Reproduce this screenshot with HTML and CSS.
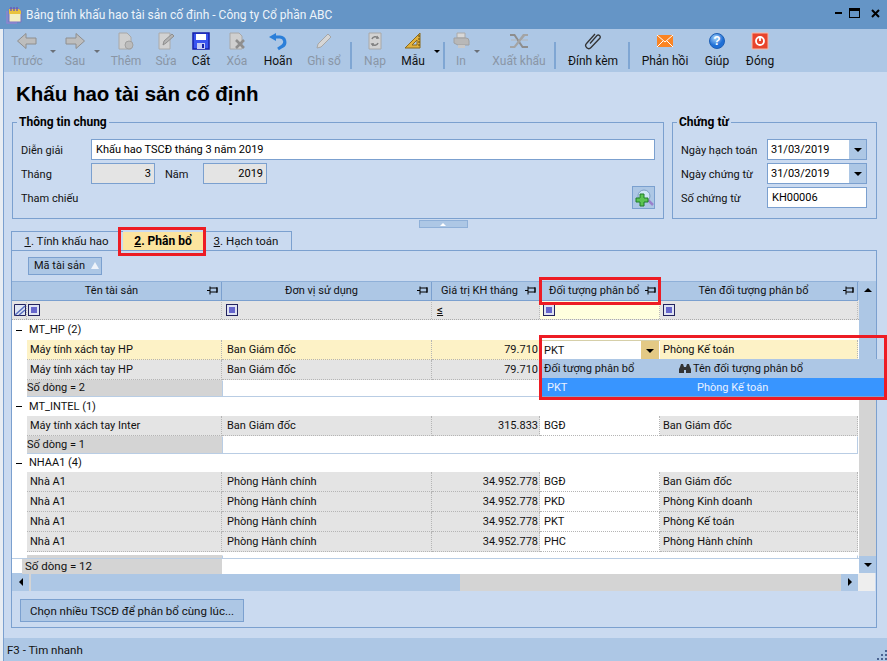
FILE: index.html
```html
<!DOCTYPE html>
<html lang="vi">
<head>
    <meta charset="UTF-8">
    <meta name="viewport" content="width=device-width, initial-scale=1.0">
    <title>Bảng tính khấu hao tài sản cố định</title>
    <link rel="stylesheet" href="styles.css">
</head>
<body>

    <!-- Title bar -->
    <div class="titlebar">
        <svg class="app-icon" width="18" height="18" viewBox="0 0 18 18"><path d="M3 3h10l2 2v11H3z" fill="#f3efc0" stroke="#7d6fc0"/><path d="M3 3h10l2 2v3H3z" fill="#e9c33d"/><path d="M5 1v4M8 1v4M11 1v4" stroke="#6a5bb5" stroke-width="1.4"/><path d="M1 5v12h10" fill="none" stroke="#8f83d0" stroke-width="1.4"/></svg>
        <span class="title-text">Bảng tính khấu hao tài sản cố định - Công ty Cổ phần ABC</span>
        <div class="win-btns">
            <span class="win-min"></span>
            <span class="win-max"></span>
            <svg width="9" height="9" viewBox="0 0 9 9"><path d="M1 1l7 7M8 1l-7 7" stroke="#000" stroke-width="2"/></svg>
        </div>
    </div>

    <div class="window">

        <!-- Toolbar -->
        <div class="toolbar">
            <div class="tool off">
                <svg width="22" height="18" viewBox="0 0 22 18"><path d="M1.5 9L10 1.5V6h10v6H10v4.500z" fill="#bdbdbd" stroke="#8e8e8e"/></svg>
                <span>Trước</span>
            </div>
            <i class="caret"></i>
            <div class="tool off">
                <svg width="22" height="18" viewBox="0 0 22 18"><path d="M20.500 9L12 1.500V6H2v6h10v4.500z" fill="#bdbdbd" stroke="#8e8e8e"/></svg>
                <span>Sau</span>
            </div>
            <i class="caret"></i>
            <div class="tool off">
                <svg width="18" height="18" viewBox="0 0 18 18"><path d="M2 1h8l4 4v12H2z" fill="#cfcfcf" stroke="#a8a8a8"/><circle cx="12" cy="13" r="4" fill="#bcbcbc" stroke="#a0a0a0"/></svg>
                <span>Thêm</span>
            </div>
            <div class="tool off">
                <svg width="18" height="18" viewBox="0 0 18 18"><path d="M2 1h11v16H2z" fill="#d2d2d2" stroke="#aaa"/><path d="M6 13l1-4 8-7 2 2-8 7z" fill="#b4b4b4" stroke="#8e8e8e"/></svg>
                <span>Sửa</span>
            </div>
            <div class="tool">
                <svg width="18" height="18" viewBox="0 0 18 18"><path d="M1 1h16v16H1z" fill="#3a55f0" stroke="#1420a8" stroke-width="1.500"/><path d="M4 2h10v6H4z" fill="#fff"/><path d="M5 11h8v6H5z" fill="#c5cdf5"/><path d="M10 12h2v4h-2z" fill="#1420a8"/></svg>
                <span>Cất</span>
            </div>
            <div class="tool off">
                <svg width="18" height="18" viewBox="0 0 18 18"><path d="M2 1h9l3 3v13H2z" fill="#cfcfcf" stroke="#a8a8a8"/><path d="M8 8l8 8M16 8l-8 8" stroke="#8e8e8e" stroke-width="2.500"/></svg>
                <span>Xóa</span>
            </div>
            <div class="tool">
                <svg width="20" height="18" viewBox="0 0 20 18"><path d="M7 5h5a5 5 0 0 1 2 9.500L10 17" fill="none" stroke="#2b7fd9" stroke-width="3.200"/><path d="M1 5l7-4v8z" fill="#2b7fd9"/></svg>
                <span>Hoãn</span>
            </div>
            <div class="tool off">
                <svg width="18" height="18" viewBox="0 0 18 18"><path d="M2 16l1-4L13 2l3 3L6 15z" fill="#d6d6d6" stroke="#a6a6a6"/></svg>
                <span>Ghi sổ</span>
            </div>
            <b class="sep"></b>
            <div class="tool off">
                <svg width="18" height="18" viewBox="0 0 18 18"><path d="M3 1h12v16H3z" fill="#d2d2d2" stroke="#a8a8a8"/><path d="M6 7a3.500 3.500 0 0 1 6-1M12 11a3.500 3.500 0 0 1-6 1" fill="none" stroke="#808080" stroke-width="1.600"/><path d="M11 3.500l2.500 3-3.500.500zM7 14.500l-2.500-3 3.500-.500z" fill="#808080"/></svg>
                <span>Nạp</span>
            </div>
            <div class="tool">
                <svg width="20" height="18" viewBox="0 0 20 18"><path d="M17 1v15H2z" fill="#e3b23c" stroke="#8a6a1c"/><path d="M14 8v5H9z" fill="#aec8e6" stroke="#8a6a1c"/><path d="M15 4h2M15 7h2M15 10h2M15 13h2" stroke="#5a4410"/></svg>
                <span>Mẫu</span>
            </div>
            <i class="caret dark"></i>
            <b class="sep"></b>
            <div class="tool off">
                <svg width="18" height="18" viewBox="0 0 18 18"><path d="M5 1h8v5H5z" fill="#d8d8d8" stroke="#aaa"/><path d="M2 6h12a3 3 0 0 1 3 3v4H6l-4-2z" fill="#b8b8b8" stroke="#a0a0a0"/><path d="M6 13h7v3H6z" fill="#c8c8c8"/></svg>
                <span>In</span>
            </div>
            <i class="caret"></i>
            <div class="tool off">
                <svg width="20" height="18" viewBox="0 0 20 18"><path d="M1 2h5l8 12h5v2h-6L5 4H1z" fill="#8d8d8d"/><path d="M14 2h5v2h-3L6 16H1v-2h4z" fill="#a4a4a4"/><path d="M8 8h-6M13 8h6" stroke="#b5b5b5"/></svg>
                <span>Xuất khẩu</span>
            </div>
            <b class="sep"></b>
            <div class="tool">
                <svg width="18" height="18" viewBox="0 0 18 18"><path d="M6 12l7-8a2 2 0 0 1 3 2.500l-9 9.500a3 3 0 0 1-4.500-4L11 2.500" fill="none" stroke="#333" stroke-width="1.300" transform="translate(0 -.5)"/></svg>
                <span>Đính kèm</span>
            </div>
            <b class="sep"></b>
            <div class="tool">
                <svg width="18" height="18" viewBox="0 0 18 18"><path d="M1 3h16v12H1z" fill="#fb8422"/><path d="M1 3l8 7 8-7M1 15l6-6M17 15l-6-6" fill="none" stroke="#fff"/></svg>
                <span>Phản hồi</span>
            </div>
            <div class="tool">
                <svg width="18" height="18" viewBox="0 0 18 18"><defs><radialGradient id="helpBlue" cx=".4" cy=".3"><stop offset="0" stop-color="#a8d4fb"/><stop offset="1" stop-color="#1f6fd6"/></radialGradient></defs><circle cx="9" cy="9" r="7.500" fill="url(#helpBlue)" stroke="#1d5fb5"/><text x="9" y="13" text-anchor="middle" class="help-mark">?</text></svg>
                <span>Giúp</span>
            </div>
            <div class="tool">
                <svg width="18" height="18" viewBox="0 0 18 18"><path d="M1 1h16v16H1z" fill="#e8442c" stroke="#f7b8a8"/><circle cx="9" cy="9" r="4" fill="none" stroke="#fff" stroke-width="1.800"/><path d="M9 4v5" stroke="#fff" stroke-width="1.800"/></svg>
                <span>Đóng</span>
            </div>
        </div>

        <h1>Khấu hao tài sản cố định</h1>

        <!-- Header groups -->
        <div class="info-row">
            <fieldset class="group general">
                <legend>Thông tin chung</legend>
                <div class="general-form">
                    <label>Diễn giải</label>
                    <div class="input wide">Khấu hao TSCĐ tháng 3 năm 2019</div>
                    <label>Tháng</label>
                    <div class="period">
                        <div class="input locked">3</div>
                        <label>Năm</label>
                        <div class="input locked">2019</div>
                    </div>
                    <label>Tham chiếu</label>
                    <div class="ref-line">
                        <span class="add-btn">
                            <svg width="20" height="20" viewBox="0 0 20 20"><circle cx="10" cy="8" r="6" fill="#cfe6f7" stroke="#7d9fc4"/><path d="M14 12l5 5" stroke="#9a82cc" stroke-width="2.500"/><path d="M6 6h4v4h4v4h-4v4H6v-4H2v-4h4z" fill="#5cc552" stroke="#1e7d2a"/></svg>
                        </span>
                    </div>
                </div>
            </fieldset>
            <fieldset class="group voucher">
                <legend>Chứng từ</legend>
                <div class="voucher-form">
                    <label>Ngày hạch toán</label>
                    <div class="input date">31/03/2019<span class="drop"><i class="caret black"></i></span></div>
                    <label>Ngày chứng từ</label>
                    <div class="input date">31/03/2019<span class="drop"><i class="caret black"></i></span></div>
                    <label>Số chứng từ</label>
                    <div class="input">KH00006</div>
                </div>
            </fieldset>
        </div>

        <div class="collapse-bar"><span><i class="caret-up"></i></span></div>

        <!-- Tabs -->
        <div class="tabs">
            <div class="tab first"><u>1</u>. Tính khấu hao</div>
            <div class="tab active"><u>2</u>. Phân bổ</div>
            <div class="tab last"><u>3</u>. Hạch toán</div>
        </div>

        <div class="panel">
            <div class="groupbar">
                <div class="groupbox">Mã tài sản <i class="sort-up"></i></div>
            </div>

            <div class="grid-wrap">
                <div class="grid">
                    <div class="row head">
                        <div class="hcell span2">Tên tài sản<svg class="pin" width="11" height="9" viewBox="0 0 11 9"><path d="M0 4.500h3M3 .5v8M3 2h7v4H3M10 1v6" fill="none" stroke="#000"/></svg></div>
                        <div class="hcell">Đơn vị sử dụng<svg class="pin" width="11" height="9" viewBox="0 0 11 9"><path d="M0 4.500h3M3 .5v8M3 2h7v4H3M10 1v6" fill="none" stroke="#000"/></svg></div>
                        <div class="hcell left">Giá trị KH tháng<svg class="pin" width="11" height="9" viewBox="0 0 11 9"><path d="M0 4.500h3M3 .5v8M3 2h7v4H3M10 1v6" fill="none" stroke="#000"/></svg></div>
                        <div class="hcell left">Đối tượng phân bổ<svg class="pin" width="11" height="9" viewBox="0 0 11 9"><path d="M0 4.500h3M3 .5v8M3 2h7v4H3M10 1v6" fill="none" stroke="#000"/></svg></div>
                        <div class="hcell">Tên đối tượng phân bổ<svg class="pin" width="11" height="9" viewBox="0 0 11 9"><path d="M0 4.500h3M3 .5v8M3 2h7v4H3M10 1v6" fill="none" stroke="#000"/></svg></div>
                    </div>

                    <div class="row filter">
                        <div class="fcell"><svg width="12" height="12" viewBox="0 0 12 12"><path d="M.5.5h11v11H.5z" fill="#dfe6f2" stroke="#23235e"/><path d="M1 11L11 2M5 11l6-5" stroke="#5a6fc0" stroke-width="1.500"/></svg></div>
                        <div class="fcell"><i class="fbox"></i></div>
                        <div class="fcell"><i class="fbox"></i></div>
                        <div class="fcell"><u class="op">≤</u></div>
                        <div class="fcell pale"><i class="fbox"></i></div>
                        <div class="fcell"><i class="fbox"></i></div>
                    </div>

                    <div class="grid-body">
                        <div class="grp"><span class="minus"></span>MT_HP (2)</div>
                        <div class="row data current">
                            <div></div>
                            <div class="c">Máy tính xách tay HP</div>
                            <div class="c">Ban Giám đốc</div>
                            <div class="c num">79.710</div>
                            <div class="c editor"><span class="edit-text">PKT</span><span class="edit-drop"><i class="caret black"></i></span></div>
                            <div class="c">Phòng Kế toán</div>
                        </div>
                        <div class="row data">
                            <div></div>
                            <div class="c">Máy tính xách tay HP</div>
                            <div class="c">Ban Giám đốc</div>
                            <div class="c num">79.710</div>
                            <div class="c open"></div>
                            <div class="c"></div>
                        </div>
                        <div class="sum h17"><div>Số dòng = 2</div><div></div></div>

                        <div class="grp h19"><span class="minus"></span>MT_INTEL (1)</div>
                        <div class="row data">
                            <div></div>
                            <div class="c">Máy tính xách tay Inter</div>
                            <div class="c">Ban Giám đốc</div>
                            <div class="c num">315.833</div>
                            <div class="c open">BGĐ</div>
                            <div class="c">Ban Giám đốc</div>
                        </div>
                        <div class="sum"><div>Số dòng = 1</div><div></div></div>

                        <div class="grp h18"><span class="minus"></span>NHAA1 (4)</div>
                        <div class="row data">
                            <div></div>
                            <div class="c">Nhà A1</div>
                            <div class="c">Phòng Hành chính</div>
                            <div class="c num">34.952.778</div>
                            <div class="c open">BGĐ</div>
                            <div class="c">Ban Giám đốc</div>
                        </div>
                        <div class="row data">
                            <div></div>
                            <div class="c">Nhà A1</div>
                            <div class="c">Phòng Hành chính</div>
                            <div class="c num">34.952.778</div>
                            <div class="c open">PKD</div>
                            <div class="c">Phòng Kinh doanh</div>
                        </div>
                        <div class="row data">
                            <div></div>
                            <div class="c">Nhà A1</div>
                            <div class="c">Phòng Hành chính</div>
                            <div class="c num">34.952.778</div>
                            <div class="c open">PKT</div>
                            <div class="c">Phòng Kế toán</div>
                        </div>
                        <div class="row data">
                            <div></div>
                            <div class="c">Nhà A1</div>
                            <div class="c">Phòng Hành chính</div>
                            <div class="c num">34.952.778</div>
                            <div class="c open">PHC</div>
                            <div class="c">Phòng Hành chính</div>
                        </div>
                        <div class="sum last"><div>Số dòng = 4</div><div></div></div>
                    </div>

                    <div class="grand-total">
                        <div class="gap"></div>
                        <div class="label">Số dòng = 12</div>
                        <div class="rest"></div>
                    </div>

                    <!-- Open dropdown of the current row -->
                    <div class="dropdown">
                        <div class="dd-head"><span class="dd-a">Đối tượng phân bổ</span><svg class="binoculars" width="12" height="11" viewBox="0 0 12 11"><path d="M1 4l1-3h2l1 3v6H0V6zM11 4l-1-3H8L7 4v6h5V6zM5 4h2v3H5z" fill="#333"/></svg><span>Tên đối tượng phân bổ</span></div>
                        <div class="dd-row"><span class="dd-b">PKT</span><span>Phòng Kế toán</span></div>
                    </div>
                </div>

                <div class="vscroll">
                    <div class="sb-btn v top"><i class="caret-up dark"></i></div>
                    <div class="v-thumb"></div>
                    <div class="v-track"></div>
                    <div class="sb-btn v"><i class="caret black"></i></div>
                </div>
            </div>

            <div class="hscroll">
                <div class="sb-btn h"><i class="caret-left"></i></div>
                <div class="h-thumb"></div>
                <div class="h-track"></div>
                <div class="sb-btn h"><i class="caret-right"></i></div>
                <div class="corner"></div>
            </div>

            <div class="panel-foot">
                <button>Chọn nhiều TSCĐ để phân bổ cùng lúc...</button>
            </div>
        </div>

        <div class="statusbar">
            <span>F3 - Tìm nhanh</span>
            <svg width="11" height="11" viewBox="0 0 11 11"><path d="M9 1h2v2H9zM5 5h2v2H5zM9 5h2v2H9zM1 9h2v2H1zM5 9h2v2H5zM9 9h2v2H9z" fill="#4a6290"/></svg>
        </div>
    </div>

    <!-- Red marks drawn on the screenshot -->
    <div class="mark mark-tab"></div>
    <div class="mark mark-head"></div>
    <div class="mark mark-row"></div>

</body>
</html>
```

FILE: styles.css
```css
html, body {
    margin: 0;
    height: 100%;
    overflow: hidden;
}

body {
    font-family: Roboto, "Liberation Sans", Arial, sans-serif;
    font-size: 11px;
    color: #111;
    background-color: #e8edf3;
    position: relative;
}

.titlebar {
    height: 29px;
    background-color: #6595c6;
    display: flex;
    align-items: center;
    padding-left: 6px;
}

.app-icon {
    margin-right: 2px;
}

.title-text {
    color: #eef4fa;
    font-size: 12px;
}

.win-btns {
    margin-left: auto;
    margin-right: 7px;
    margin-bottom: 3px;
    display: flex;
    align-items: center;
    gap: 7px;
}

.win-btns svg {
    margin-left: 4px;
}

.win-min {
    width: 7px;
    height: 2px;
    background-color: #000;
}

.win-max {
    width: 9px;
    height: 6px;
    border: 1px solid #000;
    border-top-width: 3px;
}

.window {
    margin-left: 3px;
    height: 632px;
    background-color: #cadaf0;
    border-left: 1px solid #7ba0cf;
    display: flex;
    flex-direction: column;
}

/* toolbar */
.toolbar {
    height: 43px;
    flex: none;
    background-color: #adc7e5;
    display: grid;
    grid-template-columns: 46px 6px 38px 6px 52px 28px 42px 30px 52px 40px 14px 34px 42px 6px 8px 26px 14px 62px 10px 66px 6px 66px 38px 48px;
    align-items: stretch;
    font-size: 12px;
}

.tool {
    display: flex;
    flex-direction: column;
    align-items: center;
    justify-content: space-between;
    padding: 2px 0 4px;
    white-space: nowrap;
    color: #111;
}

.tool svg {
    height: 20px;
}

.tool.off {
    color: #8a96a6;
}

.help-mark {
    font-family: "Liberation Sans", sans-serif;
    font-size: 12px;
    font-weight: bold;
    fill: #fff;
}

.caret {
    display: block;
    width: 0;
    height: 0;
    border-left: 3px solid transparent;
    border-right: 3px solid transparent;
    border-top: 3px solid #6a7078;
    align-self: start;
    margin-top: 21px;
}

.caret.dark {
    border-top-color: #000;
}

.caret.black {
    border-left-width: 4px;
    border-right-width: 4px;
    border-top: 4px solid #000;
    margin: 0;
    align-self: auto;
}

.sep {
    display: block;
    width: 2px;
    justify-self: center;
    margin: 13px 0 3px;
    background-color: #7fa6d3;
}

h1 {
    margin: 0;
    padding: 10px 0 0 12px;
    height: 33px;
    box-sizing: border-box;
    font-family: "Liberation Sans", Arial, sans-serif;
    font-size: 20.5px;
    line-height: 24px;
    font-weight: bold;
    color: #000;
    flex: none;
}

/* groups */
.info-row {
    display: flex;
    gap: 8px;
    padding: 10px 10px 0 8px;
    flex: none;
}

.group {
    margin: 0;
    padding: 10px 8px 10px;
    border: 1px solid #7ba0cf;
    box-sizing: border-box;
    min-width: 0;
}

.group legend {
    font-size: 12px;
    font-weight: bold;
    color: #000;
    padding: 0 2px;
    margin-left: -4px;
    line-height: 14px;
}

.group label {
    padding-top: 1px;
}

.general {
    flex: 1;
}

.voucher {
    width: 205px;
    flex: none;
}

.general-form {
    display: grid;
    grid-template-columns: 70px 1fr;
    grid-auto-rows: 21px;
    row-gap: 3px;
    align-items: center;
}

.voucher-form {
    display: grid;
    grid-template-columns: 86px 100px;
    grid-auto-rows: 21px;
    row-gap: 3px;
    align-items: center;
}

.input {
    height: 21px;
    box-sizing: border-box;
    background-color: #fff;
    border: 1px solid #7ba0cf;
    padding: 0 4px;
    line-height: 20px;
    color: #000;
}

.input.locked {
    width: 64px;
    background-color: #e4e4e4;
    text-align: right;
    padding-right: 3px;
}

.input.date {
    display: flex;
    justify-content: space-between;
    padding: 0 0 0 3px;
}

.drop {
    width: 17px;
    background-color: #adc7e5;
    display: flex;
    align-items: center;
    justify-content: center;
}

.period {
    display: flex;
    align-items: center;
}

.period label {
    width: 48px;
    padding-left: 10px;
    box-sizing: border-box;
}

.ref-line {
    display: flex;
    justify-content: flex-end;
}

.add-btn {
    width: 23px;
    height: 23px;
    box-sizing: border-box;
    background-color: #adc7e5;
    border: 1px solid #7ba0cf;
    display: flex;
    align-items: center;
    justify-content: center;
}

.collapse-bar {
    height: 8px;
    margin-top: 1px;
    display: flex;
    justify-content: center;
    padding-right: 5px;
    flex: none;
}

.collapse-bar span {
    width: 49px;
    background-color: #adc7e5;
    border: 1px solid #8fb0d8;
    box-sizing: border-box;
    display: flex;
    align-items: center;
    justify-content: center;
}

.caret-up {
    width: 0;
    height: 0;
    border-left: 3px solid transparent;
    border-right: 3px solid transparent;
    border-bottom: 3px solid #fff;
}

.caret-up.dark {
    border-left-width: 4px;
    border-right-width: 4px;
    border-bottom: 4px solid #000;
}

.caret-left {
    width: 0;
    height: 0;
    border-top: 4px solid transparent;
    border-bottom: 4px solid transparent;
    border-right: 4px solid #000;
}

.caret-right {
    width: 0;
    height: 0;
    border-top: 4px solid transparent;
    border-bottom: 4px solid transparent;
    border-left: 4px solid #000;
}

/* tabs */
.tabs {
    display: flex;
    height: 19px;
    margin: 3px 0 0 7px;
    flex: none;
    font-size: 11.5px;
}

.tab {
    box-sizing: border-box;
    border: 1px solid #7ba0cf;
    border-bottom: none;
    height: 19px;
    line-height: 18px;
    text-align: center;
    color: #111;
}

.tab.first {
    width: 112px;
    border-right: none;
    padding-right: 2px;
}

.tab.active {
    width: 80px;
    height: 18px;
    margin-top: 1px;
    border: none;
    background-color: #fce49e;
    font-size: 12px;
    font-weight: bold;
    color: #000;
}

.tab.last {
    width: 89px;
    border-left: none;
    padding-right: 2px;
}

.panel {
    height: 378px;
    margin: 0 10px 0 7px;
    box-sizing: border-box;
    border: 1px solid #7ba0cf;
    flex: none;
}

.groupbar {
    padding: 6px 16px;
}

.groupbox {
    width: 74px;
    height: 18px;
    box-sizing: border-box;
    background-color: #adc7e5;
    border: 1px solid #7ba0cf;
    line-height: 16px;
    padding-left: 5px;
    white-space: nowrap;
}

.sort-up {
    display: inline-block;
    width: 0;
    height: 0;
    border-left: 4px solid transparent;
    border-right: 4px solid transparent;
    border-bottom: 7px solid #eef3fa;
    margin-left: 3px;
}

/* grid */
.grid-wrap {
    display: flex;
    height: 292px;
}

.grid {
    width: 847px;
    flex: none;
    display: flex;
    flex-direction: column;
    position: relative;
    background-color: #fff;
}

.row {
    display: grid;
    grid-template-columns: 15px 195px 210px 108px 120px 198px;
}

.head {
    display: grid;
    grid-template-columns: 210px 210px 108px 120px 198px 1px;
    height: 19px;
    flex: none;
    background-color: #adc7e5;
    border-top: 1px solid #8fb0d8;
    box-sizing: border-box;
}

.hcell {
    position: relative;
    text-align: center;
    line-height: 18px;
    border-right: 1px solid #7ba0cf;
    border-bottom: 1px solid #7ba0cf;
    box-sizing: border-box;
    padding-right: 10px;
    white-space: nowrap;
    color: #111;
}

.hcell.left {
    text-align: left;
    padding-left: 9px;
}

.pin {
    position: absolute;
    right: 3px;
    top: 4px;
}

.filter {
    height: 20px;
    flex: none;
    background-color: #e4e4e4;
    border-bottom: 1px dotted #aaa;
    box-sizing: border-box;
}

.fcell {
    display: flex;
    align-items: center;
    padding-left: 2px;
    border-right: 1px dotted #bbb;
}

.fcell:nth-child(2) {
    padding-left: 0;
}

.fcell:nth-child(3) {
    padding-left: 3px;
}

.fcell.pale {
    background-color: #ffffde;
}

.fbox {
    width: 12px;
    height: 12px;
    box-sizing: border-box;
    background-color: #6666cc;
    border: 3px solid #dfe3f3;
    outline: 1px solid #23235e;
    outline-offset: -1px;
    margin-left: 1px;
}

.op {
    margin-left: 3px;
    font-size: 12px;
}

.grid-body {
    flex: 1;
    min-height: 0;
    overflow: hidden;
}

.grp {
    height: 20px;
    line-height: 20px;
    display: flex;
    align-items: center;
    color: #111;
}

.grp.h19 {
    height: 19px;
}

.grp.h18 {
    height: 18px;
}

.minus {
    width: 6px;
    height: 1px;
    background-color: #000;
    margin: 0 7px 0 4px;
}

.data {
    height: 20px;
    line-height: 20px;
}

.data .c {
    background-color: #e4e4e4;
    border-right: 1px dotted #b5b5b5;
    border-bottom: 1px dotted #b5b5b5;
    box-sizing: border-box;
    padding: 0 4px 0 3px;
    white-space: nowrap;
    overflow: hidden;
}

.data .c:nth-child(3) {
    padding-left: 5px;
}

.data .num {
    text-align: right;
    padding-right: 1px;
}

.data .open {
    background-color: #fff;
    padding-left: 4px;
}

.current .c {
    background-color: #fdf2c6;
}

.current .editor {
    display: flex;
    padding: 0 1px 0 0;
    background-color: #fff;
    border: none;
    border-top: 1px solid #d6cfa8;
}

.edit-text {
    flex: 1;
    padding-left: 4px;
}

.edit-drop {
    width: 18px;
    background-color: #e3c985;
    display: flex;
    align-items: center;
    justify-content: center;
}

.sum {
    display: grid;
    grid-template-columns: 15px 195px 636px;
    height: 18px;
    line-height: 17px;
}

.sum.h17 {
    height: 17px;
    line-height: 16px;
}

.sum.last {
    margin-top: 3px;
}

.sum div:first-child {
    grid-column: 2;
    background-color: #d4d4d4;
    border-bottom: 1px solid #b9cde4;
    white-space: nowrap;
}

.sum div:last-child {
    border: 1px solid #b9cde4;
    border-top-color: #fff;
    box-sizing: border-box;
}

.grand-total {
    display: grid;
    grid-template-columns: 10px 200px 637px;
    height: 15px;
    line-height: 15px;
    flex: none;
    border-top: 1px solid #b9cde4;
    box-sizing: border-box;
    font-size: 11.5px;
}

.grand-total .label {
    background-color: #d4d4d4;
    padding-left: 3px;
}

.grand-total .rest {
    background-color: #fff;
}

.dropdown {
    position: absolute;
    left: 529px;
    top: 78px;
    width: 345px;
    border-bottom: 1px solid #7ba0cf;
}

.dd-head {
    height: 19px;
    background-color: #adc7e5;
    display: flex;
    align-items: center;
    padding-left: 3px;
}

.dd-a {
    width: 135px;
}

.binoculars {
    margin-right: 2px;
}

.dd-row {
    height: 18px;
    background-color: #3895ff;
    color: #e8f1ff;
    display: flex;
    align-items: center;
    padding-left: 6px;
}

.dd-b {
    width: 150px;
}

/* scrollbars */
.vscroll {
    width: 17px;
    display: flex;
    flex-direction: column;
}

.sb-btn {
    background-color: #adc7e5;
    display: flex;
    align-items: center;
    justify-content: center;
    flex: none;
}

.sb-btn.v {
    height: 17px;
}

.sb-btn.v.top {
    height: 18px;
}

.v-thumb {
    height: 96px;
    background-color: #adc7e5;
}

.v-track {
    flex: 1;
    background-color: #d4d4d4;
}

.hscroll {
    display: flex;
    height: 18px;
}

.sb-btn.h {
    width: 17px;
}

.h-thumb {
    width: 429px;
    background-color: #adc7e5;
    border-left: 2px solid #d4d4d4;
}

.h-track {
    width: 381px;
    background-color: #d4d4d4;
}

.corner {
    width: 17px;
    background-color: #eeeeee;
}

.panel-foot {
    padding: 8px 0 0 8px;
}

button {
    width: 224px;
    height: 23px;
    background-color: #adc7e5;
    border: 1px solid #7ba0cf;
    font-family: inherit;
    font-size: 11.5px;
    color: #111;
    padding: 0;
}

.statusbar {
    height: 23px;
    margin-top: auto;
    background-color: #adc7e5;
    display: flex;
    align-items: center;
    justify-content: space-between;
    padding-left: 3px;
    flex: none;
    font-size: 11.5px;
}

.statusbar svg {
    align-self: flex-end;
    margin-bottom: 1px;
}

/* red annotation boxes */
.mark {
    position: absolute;
    box-sizing: border-box;
    border: 3px solid #ed1c24;
}

.mark-tab {
    left: 118px;
    top: 227px;
    width: 88px;
    height: 29px;
}

.mark-head {
    left: 539px;
    top: 277px;
    width: 122px;
    height: 28px;
}

.mark-row {
    left: 539px;
    top: 335px;
    width: 348px;
    height: 65px;
}
```
